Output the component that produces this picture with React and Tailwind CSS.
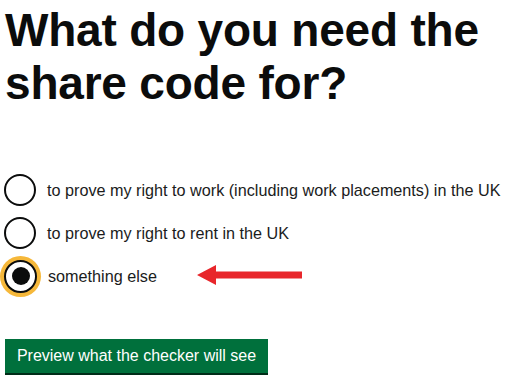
export default function App() {
  const options = [
    { label: "to prove my right to work (including work placements) in the UK", checked: false },
    { label: "to prove my right to rent in the UK", checked: false },
    { label: "something else", checked: true },
  ];

  return (
    <div className="w-[531px] h-[385px] bg-white overflow-hidden pl-[4px] font-['Liberation_Sans',Arial,sans-serif] text-[#0b0c0c]">
      <h1 className="pt-[4px] pl-[1px] text-[46px] leading-[53px] font-bold tracking-[-0.2px]">
        What do you need the
        <br />
        share code for?
      </h1>

      <div className="mt-[64px] flex flex-col gap-[11px]">
        {options.map((opt) => (
          <div key={opt.label} className="relative flex items-center gap-[11px] h-[32px]">
            <span
              className={
                opt.checked
                  ? "w-[33px] h-[33px] rounded-full border-2 border-[#0b0c0c] bg-white flex items-center justify-center shadow-[0_0_0_4px_#f6b83a]"
                  : "w-[32px] h-[32px] rounded-full border-2 border-[#0b0c0c] bg-white flex items-center justify-center"
              }
            >
              {opt.checked ? <span className="w-[18px] h-[18px] rounded-full bg-[#0b0c0c]"></span> : null}
            </span>
            <span className="text-[16.2px] leading-[20px] text-[#1b1c1c]">{opt.label}</span>
            {opt.checked ? (
              <svg
                className="absolute left-[193px] top-[4px]"
                width="106"
                height="22"
                viewBox="0 0 106 22"
              >
                <polygon points="0,11 19,1 19,7.5 105,7.5 105,14.5 19,14.5 19,21" fill="#e8262b" />
              </svg>
            ) : null}
          </div>
        ))}
      </div>

      <button className="mt-[47px] ml-[1px] w-[263px] h-[34px] bg-[#00703c] text-white text-[16px] leading-[34px] shadow-[0_2px_0_#002d18]">
        Preview what the checker will see
      </button>
    </div>
  );
}
